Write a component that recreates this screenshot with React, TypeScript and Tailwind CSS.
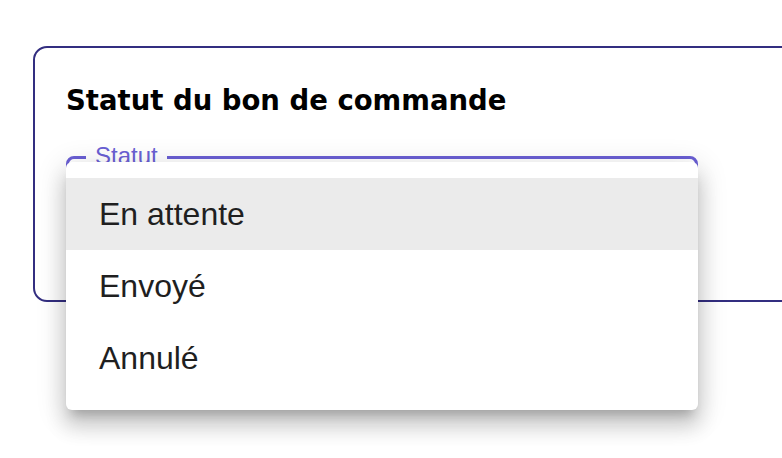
import React from "react";

export default function App() {
  const items = ["En attente", "Envoyé", "Annulé"];
  return (
    <div className="w-[782px] h-[458px] overflow-hidden bg-white pt-[46px] pl-[33px]">
      <div className="w-[800px] h-[256px] rounded-[14px] border-2 border-[#332e80] px-[31px] pt-[35.5px]">
        <h1
          className="text-[27.5px] leading-[32px] font-bold text-black"
          style={{ fontFamily: "'DejaVu Sans', Lato, sans-serif" }}
        >
          Statut du bon de commande
        </h1>
        <div className="relative mt-[40.5px] w-[632px] h-[112px] rounded-[8px] border-[3px] border-[#6a5fd4]">
          <span
            className="absolute left-[17px] top-[-15px] bg-white px-[9px] text-[24px] leading-[24px] text-[#6a5fd4]"
            style={{ fontFamily: "'Liberation Sans', Arial, sans-serif" }}
          >
            Statut
          </span>
          <div
            className="absolute left-[-3px] right-[-3px] top-[3px] z-10 rounded-[6px] bg-white py-[16px] shadow-[0px_10px_10px_-6px_rgba(0,0,0,0.2),0px_16px_20px_2px_rgba(0,0,0,0.14),0px_6px_28px_4px_rgba(0,0,0,0.12)]"
            style={{ fontFamily: "'Liberation Sans', Arial, sans-serif" }}
          >
            {items.map((it, i) => (
              <div
                key={it}
                className={
                  i === 0
                    ? "flex h-[72px] items-center bg-[#ebebeb] px-[33px] text-[32px] text-[#1f1f1f]"
                    : "flex h-[72px] items-center px-[33px] text-[32px] text-[#1f1f1f]"
                }
              >
                {it}
              </div>
            ))}
          </div>
        </div>
      </div>
    </div>
  );
}
